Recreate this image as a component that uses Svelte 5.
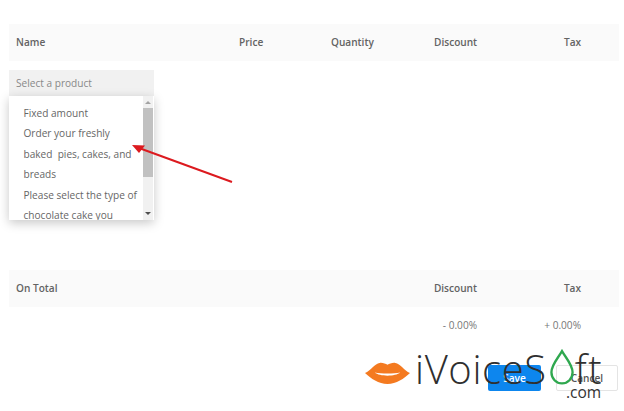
<script lang="ts">
  const columns = ['Price', 'Quantity', 'Discount', 'Tax'];
  const products = [
    'Fixed amount',
    'Order your freshly baked\u00a0 pies, cakes, and breads',
    'Please select the type of chocolate cake you'
  ];
</script>

<div class="page">
  <div class="top">
    <h2>Products</h2>
    <span class="top-link">y</span>
  </div>

  <div class="table-head products-head">
    <span class="name">Name</span>
    {#each columns as col}
      <span class="col {col.toLowerCase()}">{col}</span>
    {/each}
  </div>

  <div class="product-row">
    <div class="select">Select a product</div>
    <div class="dropdown">
      <ul>
        {#each products as p}
          <li>{p}</li>
        {/each}
      </ul>
      <div class="scrollbar">
        <span class="arrow up"></span>
        <span class="thumb"></span>
        <span class="arrow down"></span>
      </div>
    </div>
  </div>

  <div class="table-head total-head">
    <span class="name">On Total</span>
    <span class="total-discount">Discount</span>
    <span class="total-tax">Tax</span>
  </div>
  <div class="total-row">
    <span class="total-discount">- 0.00%</span>
    <span class="total-tax">+ 0.00%</span>
  </div>

  <div class="actions">
    <button type="button" class="save">Save</button>
    <button type="button" class="cancel">Cancel</button>
  </div>

  <svg class="arrow-mark" width="110" height="50" viewBox="0 0 110 50">
    <line x1="101" y1="38" x2="8" y2="4" stroke="#dc1a1f" stroke-width="2" />
    <polygon points="1,1 14,1.5 8,9" fill="#dc1a1f" />
  </svg>

  <div class="logo">
    <svg class="lips" width="45" height="22" viewBox="0 0 46 24" preserveAspectRatio="none">
      <path d="M0 12 C6 9 10 2 15 1 C18 0.5 21 2 23 3 C25 2 28 0.5 31 1 C36 2 40 9 46 12 C40 18 32 24 23 24 C14 24 6 18 0 12Z" fill="#f47a20" />
      <path d="M10 11.5 C17 13 29 13 36 11.5 C31 16 15 16 10 11.5Z" fill="#fff" />
    </svg>
    <div class="wordmark">
      <span>iVoiceS</span>
      <svg class="drop" width="26" height="37" viewBox="0 0 24 35">
        <path d="M12 2 C16 9 22 15 22 22 C22 28 17.5 32.5 12 32.5 C6.5 32.5 2 28 2 22 C2 15 8 9 12 2Z" fill="none" stroke="#2fa84f" stroke-width="2.2" />
      </svg>
      <span class="ft">ft</span>
    </div>
    <span class="dotcom">.com</span>
  </div>
</div>

<style>
  :global(body) {
    margin: 0;
    background: #fff;
  }

  .page {
    position: relative;
    width: 624px;
    height: 411px;
    overflow: hidden;
    padding: 0 5px 0 9px;
    box-sizing: border-box;
    font-family: 'Open Sans', sans-serif;
    font-size: 10.1px;
    color: #555;
  }

  .top {
    display: flex;
    justify-content: space-between;
    height: 27px;
    margin-top: -15px;
    padding-bottom: 12px;
  }

  h2 {
    margin: 0;
    font-size: 17px;
    font-weight: 400;
    line-height: 18px;
    color: #555;
  }

  .top-link {
    margin-right: 42px;
    font-size: 11px;
    line-height: 15px;
  }

  .table-head {
    position: relative;
    display: flex;
    align-items: center;
    height: 37px;
    padding: 0 0 1px 7px;
    box-sizing: border-box;
    background: #fafafa;
    font-weight: 600;
    color: #636363;
  }

  .products-head span.col {
    position: absolute;
    top: 11px;
  }

  .price { left: 230px; }
  .quantity { left: 322px; }
  .discount { left: 425px; }
  .tax { left: 555px; }

  .product-row {
    position: relative;
    height: 200px;
    padding-top: 9px;
  }

  .select {
    width: 145px;
    height: 26px;
    padding-left: 7px;
    box-sizing: border-box;
    line-height: 26px;
    background: #f1f1f1;
    color: #888;
  }

  .dropdown {
    position: absolute;
    top: 35px;
    left: 0;
    width: 145px;
    height: 124px;
    overflow: hidden;
    background: #fff;
    box-shadow: 0 3px 10px rgba(0, 0, 0, 0.22);
    display: flex;
  }

  ul {
    flex: 1;
    margin: 0;
    padding: 7px 0 0 14.5px;
    list-style: none;
    line-height: 20.4px;
    color: #666;
  }

  .scrollbar {
    flex: none;
    width: 10px;
    margin-right: 1px;
    background: #f1f1f1;
    display: flex;
    flex-direction: column;
    align-items: center;
  }

  .thumb {
    width: 100%;
    height: 69px;
    background: #c1c1c1;
  }

  .arrow {
    width: 0;
    height: 0;
    border-left: 3px solid transparent;
    border-right: 3px solid transparent;
  }

  .arrow.up {
    margin: 5px 0 4px;
    border-bottom: 3px solid #a3a3a3;
  }

  .arrow.down {
    margin-top: 35px;
    border-top: 3px solid #505050;
  }

  .total-discount {
    margin-left: auto;
    text-align: right;
  }

  .total-tax {
    width: 142px;
    padding-right: 38px;
    box-sizing: border-box;
    text-align: right;
  }

  .total-row {
    display: flex;
    height: 37px;
    padding-top: 11px;
    box-sizing: border-box;
    color: #777;
  }

  .actions {
    display: flex;
    justify-content: flex-end;
    gap: 15px;
    margin-top: 21px;
    padding-right: 1px;
  }

  button {
    height: 26px;
    padding: 0;
    border-radius: 2px;
    font: 600 10.1px 'Open Sans', sans-serif;
  }

  .save {
    width: 53px;
    border: none;
    background: #0d86ee;
    color: #fff;
  }

  .cancel {
    width: 62px;
    border: 1px solid #e4e4e4;
    background: #fff;
    color: #555;
  }

  .arrow-mark {
    position: absolute;
    left: 131px;
    top: 144px;
    overflow: visible;
  }

  .logo {
    position: absolute;
    left: 365px;
    top: 353px;
    width: 250px;
    height: 50px;
  }

  .lips {
    position: absolute;
    left: 0;
    top: 9px;
  }

  .wordmark {
    position: absolute;
    left: 50px;
    top: -11px;
    display: flex;
    align-items: center;
    font-family: 'Open Sans', sans-serif;
    font-weight: 300;
    font-size: 40px;
    line-height: 54px;
    color: #2f2f2f;
    letter-spacing: 0.6px;
  }

  .drop {
    margin: -3px 0 0 2px;
  }

  .ft {
    letter-spacing: 1.5px;
  }

  .dotcom {
    position: absolute;
    left: 201px;
    top: 28px;
    font-size: 15.5px;
    line-height: 22px;
    font-weight: 400;
    color: #333;
  }
</style>
